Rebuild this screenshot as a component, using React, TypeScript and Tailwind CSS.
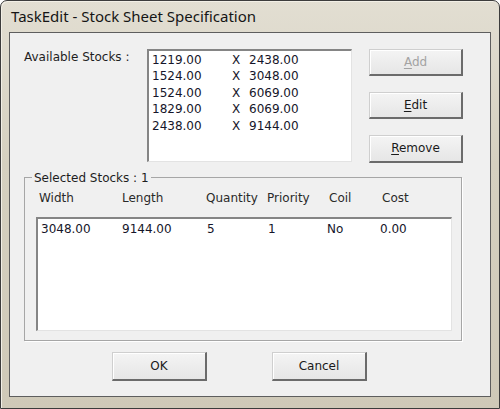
import React from "react";

const F = { fontFamily: '"DejaVu Sans", Tahoma, sans-serif' };

function Btn({ children, disabled }: { children: React.ReactNode; disabled?: boolean }) {
  return (
    <div
      className={
        "flex-1 flex items-center justify-center bg-[linear-gradient(#f4f4f4,#e6e6e6)] border-t border-l border-[#cfcfcf] border-r-2 border-b-2 border-r-[#6b6b6b] border-b-[#6b6b6b] shadow-[inset_1px_1px_0_#ffffff] text-[12px] " +
        (disabled ? "text-[#a3a3a3]" : "text-[#1a1a1a]")
      }
      style={F}
    >
      {children}
    </div>
  );
}

const stocks = [
  ["1219.00", "2438.00"],
  ["1524.00", "3048.00"],
  ["1524.00", "6069.00"],
  ["1829.00", "6069.00"],
  ["2438.00", "9144.00"],
];

export default function App() {
  return (
    <div className="w-[500px] h-[409px] bg-white">
      <div className="w-[500px] h-[409px] flex flex-col border border-[#3c3c3c] rounded-t-[7px] bg-[linear-gradient(180deg,#e2ded2_0%,#d5d0c0_40%,#cfc9b8_100%)] pl-[8px] pr-[9px] pb-[11px] shadow-[inset_1px_1px_0_#f2efe6]">
        <div className="h-[31px] flex items-center pl-[2px] pb-[1px]">
          <span
            className="text-[15px] text-[#151515]"
            style={{ fontFamily: '"Noto Sans", "Open Sans", sans-serif' }}
          >
            TaskEdit - Stock Sheet Specification
          </span>
        </div>
        <div className="w-[482px] h-[366px] border border-[#5e5e5e] bg-[#f0f0f0] flex flex-col" style={F}>
          <div className="flex mt-[16px] ml-[14px]">
            <div className="w-[123px] text-[12px] leading-[14px] pt-[1px] text-[#1e1e1e]">Available Stocks :</div>
            <div className="w-[205px] h-[113px] bg-white border-t-2 border-l-2 border-[#858585] border-r border-b border-r-[#e3e3e3] border-b-[#e3e3e3] pl-[3px] pt-[1px]">
              {stocks.map(([a, b], i) => (
                <div key={i} className="grid grid-cols-[80px_17px_auto] text-[12px] leading-[16.5px] text-[#16162a]">
                  <span>{a}</span>
                  <span>X</span>
                  <span>{b}</span>
                </div>
              ))}
            </div>
            <div className="ml-[17px] w-[94px] flex flex-col gap-[16px]">
              <div className="h-[27px] flex flex-col">
                <Btn disabled>
                  <span>
                    <span className="underline underline-offset-2">A</span>dd
                  </span>
                </Btn>
              </div>
              <div className="h-[27px] flex flex-col">
                <Btn>
                  <span>
                    <span className="underline underline-offset-2">E</span>dit
                  </span>
                </Btn>
              </div>
              <div className="h-[28px] flex flex-col">
                <Btn>
                  <span>
                    <span className="underline underline-offset-2">R</span>emove
                  </span>
                </Btn>
              </div>
            </div>
          </div>

          <fieldset className="ml-[14px] mt-[8px] w-[438px] border border-[#a6a6a6] shadow-[1px_1px_0_#ffffff] pl-[7px] pr-[9px] pb-[9px]">
            <legend className="px-[2px] text-[12px] leading-[14px] text-[#1e1e1e]">Selected Stocks : 1</legend>
            <div className="ml-[7px] mt-[6px] grid grid-cols-[83px_84px_61px_62px_53px_1fr] text-[12px] leading-[14px] text-[#2a2a2a]">
              <span>Width</span>
              <span>Length</span>
              <span>Quantity</span>
              <span>Priority</span>
              <span>Coil</span>
              <span>Cost</span>
            </div>
            <div className="ml-[4px] mt-[12px] w-[416px] h-[114px] bg-white border-t-2 border-l-2 border-[#858585] border-r border-b border-r-[#e3e3e3] border-b-[#e3e3e3] pl-[3px] pt-[2px]">
              <div className="grid grid-cols-[81px_85px_61px_59px_53px_1fr] text-[12px] leading-[16px] text-[#16162a]">
                <span>3048.00</span>
                <span>9144.00</span>
                <span>5</span>
                <span>1</span>
                <span>No</span>
                <span>0.00</span>
              </div>
            </div>
          </fieldset>

          <div className="flex pl-[102px] gap-[65px] mt-[11px]">
            <div className="w-[95px] h-[29px] flex flex-col">
              <Btn>OK</Btn>
            </div>
            <div className="w-[95px] h-[29px] flex flex-col">
              <Btn>Cancel</Btn>
            </div>
          </div>
        </div>
      </div>
    </div>
  );
}
